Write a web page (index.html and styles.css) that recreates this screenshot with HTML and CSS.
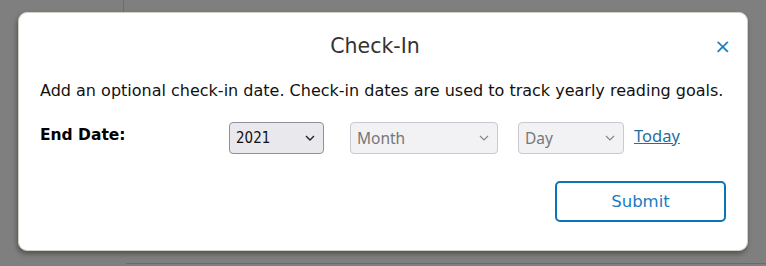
FILE: index.html
```html
<!DOCTYPE html>
<html lang="en">
<head>
    <meta charset="UTF-8">
    <title>Check-In</title>
    <link rel="stylesheet" href="styles.css">
</head>
<body>
    <div class="backdrop">
        <div class="page-edge"></div>
        <div class="page-foot"></div>
    </div>

    <div class="modal">
        <div class="modal-header">
            <h2>Check-In</h2>
            <span class="close">&times;</span>
        </div>

        <p class="intro">Add an optional check-in date. Check-in dates are used to track yearly reading goals.</p>

        <div class="date-row">
            <label>End Date:</label>
            <div class="selects">
                <div class="select year">
                    <span>2021</span>
                    <svg width="10" height="6" viewBox="0 0 10 6"><path d="M1 1l4 4 4-4" fill="none" stroke="#222" stroke-width="1.4"/></svg>
                </div>
                <div class="select month off">
                    <span>Month</span>
                    <svg width="10" height="6" viewBox="0 0 10 6"><path d="M1 1l4 4 4-4" fill="none" stroke="#888" stroke-width="1.2"/></svg>
                </div>
                <div class="select day off">
                    <span>Day</span>
                    <svg width="10" height="6" viewBox="0 0 10 6"><path d="M1 1l4 4 4-4" fill="none" stroke="#888" stroke-width="1.2"/></svg>
                </div>
                <a href="#" class="today">Today</a>
            </div>
        </div>

        <div class="modal-footer">
            <button>Submit</button>
        </div>
    </div>
</body>
</html>
```

FILE: styles.css
```css
body {
    margin: 0;
    font-family: 'DejaVu Sans', Verdana, sans-serif;
    background-color: #7f7f7f;
    width: 766px;
    height: 266px;
    overflow: hidden;
    padding: 12px 0 0 18px;
    box-sizing: border-box;
}
.backdrop {
    position: absolute;
    inset: 0;
}
.page-edge {
    position: absolute;
    left: 123px;
    top: 0;
    width: 1px;
    height: 14px;
    background-color: #6c6c6c;
}
.page-foot {
    position: absolute;
    left: 126px;
    right: 0;
    top: 263px;
    height: 1px;
    background-color: #6a6a6a;
}
.modal {
    position: relative;
    width: 730px;
    height: 239px;
    box-sizing: border-box;
    background-color: white;
    border-radius: 9px;
    border: 1px solid #cfcfc4;
    box-shadow: -1px 3px 5px rgba(0,0,0,0.35);
    padding: 0 21px;
}
.modal-header {
    display: flex;
    justify-content: center;
    align-items: center;
    height: 66px;
}
.modal-header h2 {
    margin: 0 16px 0 0;
    font-weight: normal;
    font-size: 20.5px;
    color: #333;
}
.close {
    position: absolute;
    right: 16px;
    top: 21px;
    color: #1a7abf;
    font-size: 20px;
}
.intro {
    margin: 2px 0 0;
    font-size: 16px;
    color: #111;
    white-space: nowrap;
}
.date-row {
    display: flex;
    align-items: center;
    margin-top: 22px;
}
.date-row label {
    font-weight: bold;
    font-size: 15.5px;
    color: #000;
    width: 189px;
    margin-top: -6px;
}
.selects {
    display: flex;
    align-items: center;
}
.select {
    display: flex;
    align-items: center;
    justify-content: space-between;
    box-sizing: border-box;
    height: 32px;
    padding: 0 8px 0 6px;
    border-radius: 4px;
    font-size: 15px;
}
.select.year {
    width: 95px;
    background-color: #e9e9ed;
    border: 1px solid #8f8f9d;
    color: #111;
    font-family: 'DejaVu Sans Condensed', 'DejaVu Sans', sans-serif;
}
.select.off {
    background-color: #f2f2f4;
    border: 1px solid #c9c9cf;
    color: #777;
    font-family: 'Noto Sans', sans-serif;
    font-size: 15.5px;
}
.select.month {
    width: 148px;
    margin-left: 26px;
}
.select.day {
    width: 106px;
    margin-left: 20px;
}
.today {
    margin-left: 10px;
    margin-top: -6px;
    color: #1d6fa5;
    font-size: 16.5px;
    font-family: 'Noto Sans', sans-serif;
}
.modal-footer {
    display: flex;
    justify-content: flex-end;
    margin-top: 27px;
}
button {
    width: 171px;
    height: 41px;
    background-color: white;
    color: #1a7abf;
    border: 2px solid #0b73b7;
    border-radius: 5px;
    font-family: 'DejaVu Sans', sans-serif;
    font-size: 16.5px;
}
```
